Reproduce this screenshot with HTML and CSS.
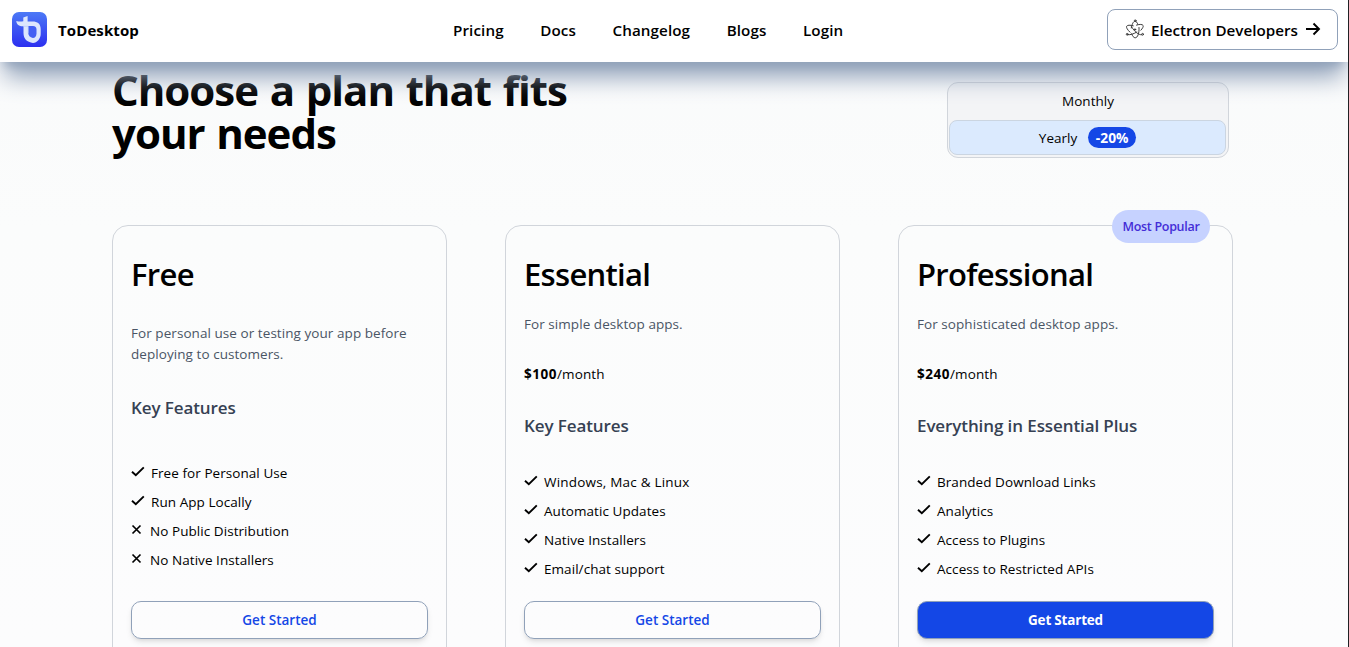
FILE: index.html
```html
<!DOCTYPE html>
<html lang="en">
<head>
<meta charset="utf-8">
<title>ToDesktop</title>
<link rel="stylesheet" href="styles.css">
</head>
<body>
<svg class="defs" width="0" height="0" aria-hidden="true">
  <symbol id="check" viewBox="0 0 14 12"><path d="M1 5.700 4.800 9.300 12.800 1.400" fill="none" stroke="#000" stroke-width="1.900"/></symbol>
  <symbol id="cross" viewBox="0 0 12 12"><path d="M1.500 1.500 9.500 9.500M9.500 1.500 1.500 9.500" fill="none" stroke="#000" stroke-width="1.700"/></symbol>
</svg>
<header class="topbar">
  <a class="brand">
    <svg class="logo" viewBox="0 0 36 36">
      <defs><linearGradient id="lg" x1="0" y1="0" x2="0" y2="1"><stop offset="0" stop-color="#4c79f6"/><stop offset="1" stop-color="#2c2ff0"/></linearGradient></defs>
      <rect x="0" y="0" width="35" height="35" rx="7" fill="url(#lg)"/>
      <path d="M4.300 9C6.500 9.700 9 9.800 11.300 9.300V5.500L15.600 4V9.600H20.500C25.500 9.600 28.700 12 28.700 17V22C28.700 26.500 25 31 21 31C15 30 11.500 27 11.500 21V14.300C7.500 14.600 4.500 12.500 4.300 9Z" fill="#dce6fd"/>
      <path d="M16.200 14H21C23.300 14 24.500 15.500 24.500 17.500V21.500C24.500 24 23 26 20.800 26C18 25.500 16.200 23.500 16.200 20.500Z" fill="#4360f3"/>
      <path d="M11.500 14.300H16.200V21" fill="none" stroke="#b9caf9" stroke-width="0.700"/>
    </svg>
    <span class="brand-name">ToDesktop</span>
  </a>
  <nav class="nav">
    <a>Pricing</a><a>Docs</a><a>Changelog</a><a>Blogs</a><a>Login</a>
  </nav>
  <a class="dev-button">
    <svg class="electron" viewBox="0 0 20 20" fill="none" stroke="#3c3c3c" stroke-width="1" stroke-linecap="round">
      <path d="M5 13.200C2.500 10.800 1 8.500 1.700 7.200C2.300 6 4.900 5.900 8.300 6.800"/>
      <path d="M11.500 6.100C14.800 5.100 17.500 5.200 18.100 6.500C18.600 7.600 17.600 9.300 15.900 11.200"/>
      <path d="M6.300 9C7 5 8.400 2.300 10 2.200C11.100 2.200 12.200 3.500 13 5.500"/>
      <path d="M14 8.500C14.400 14 12.700 18.800 10.200 18.800C8.700 18.800 7.500 17.200 6.700 14.800"/>
      <path d="M6.500 7.700C9.500 12.700 13.500 16 16.600 15.800"/>
      <path d="M2.800 15.700C5.500 16 8.800 14.900 11.800 13"/>
      <circle cx="10" cy="10.500" r="0.700" fill="#3c3c3c"/>
      <circle cx="10.200" cy="1.800" r="0.900"/>
      <circle cx="2.200" cy="15.300" r="0.900"/>
      <circle cx="17.600" cy="15.300" r="0.900"/>
    </svg>
    <span class="dev-label">Electron Developers</span>
    <svg class="arrow" viewBox="0 0 16 14" fill="none" stroke="#000" stroke-width="1.900"><path d="M1 7H14M8.500 1.500 14 7 8.500 12.500"/></svg>
  </a>
</header>
<main class="page">
  <section class="intro">
    <h1 class="title"><span class="title-one">Choose a plan that fits</span><br><span class="title-two">your needs</span></h1>
    <div class="billing">
      <div class="option">Monthly</div>
      <div class="option selected"><span class="yearly">Yearly</span><span class="discount">-20%</span></div>
    </div>
  </section>
  <section class="plans">
    <article class="card free">
      <h2>Free</h2>
      <p class="summary">For personal use or testing your app before<br>deploying to customers.</p>
      <h3>Key Features</h3>
      <ul>
        <li><svg class="check"><use href="#check"/></svg>Free for Personal Use</li>
        <li><svg class="check"><use href="#check"/></svg>Run App Locally</li>
        <li><svg class="cross"><use href="#cross"/></svg>No Public Distribution</li>
        <li><svg class="cross"><use href="#cross"/></svg>No Native Installers</li>
      </ul>
      <a class="cta">Get Started</a>
    </article>
    <article class="card">
      <h2>Essential</h2>
      <p class="summary">For simple desktop apps.</p>
      <p class="price"><b>$100</b>/month</p>
      <h3>Key Features</h3>
      <ul>
        <li class="wide"><svg class="check"><use href="#check"/></svg>Windows, Mac &amp; Linux</li>
        <li><svg class="check"><use href="#check"/></svg>Automatic Updates</li>
        <li><svg class="check"><use href="#check"/></svg>Native Installers</li>
        <li><svg class="check"><use href="#check"/></svg>Email/chat support</li>
      </ul>
      <a class="cta">Get Started</a>
    </article>
    <article class="card">
      <span class="popular">Most Popular</span>
      <h2>Professional</h2>
      <p class="summary">For sophisticated desktop apps.</p>
      <p class="price"><b>$240</b>/month</p>
      <h3>Everything in Essential Plus</h3>
      <ul>
        <li><svg class="check"><use href="#check"/></svg>Branded Download Links</li>
        <li><svg class="check"><use href="#check"/></svg>Analytics</li>
        <li><svg class="check"><use href="#check"/></svg>Access to Plugins</li>
        <li><svg class="check"><use href="#check"/></svg>Access to Restricted APIs</li>
      </ul>
      <a class="cta primary">Get Started</a>
    </article>
  </section>
</main>
</body>
</html>
```

FILE: styles.css
```css
* { box-sizing: border-box; }
html { height: 100%; overflow: hidden; }
body {
  margin: 0;
  height: 647px;
  overflow: hidden;
  border-right: 1px solid #202124;
  background: linear-gradient(#f9fafb, #fbfcfc 35%, #fcfcfd);
  color: #000;
  font-family: "Open Sans", "Noto Sans", sans-serif;
  font-size: 13.5px;
}
h1, h2, h3, p, ul { margin: 0; padding: 0; }
ul { list-style: none; }
svg { flex: none; }
.defs { display: block; }

.topbar {
  position: relative;
  z-index: 2;
  height: 62px;
  padding: 0 10px 0 12px;
  display: grid;
  grid-template-columns: 441px 1fr auto;
  align-items: center;
  background: #fff;
  box-shadow: 0 20px 25px -5px #90a1b9, 0 8px 10px -6px #90a1b9;
  font-size: 15.2px;
  font-weight: 600;
}
.brand { display: flex; align-items: center; gap: 10px; }
.logo { width: 36px; height: 36px; margin-top: -2px; }
.brand-name { margin-top: -2px; font-size: 15px; font-weight: 700; letter-spacing: 0.1px; }
.nav { display: flex; gap: 36.500px; margin-top: -2px; letter-spacing: 0.1px; }
.dev-button {
  height: 41px;
  width: 231px;
  margin-top: -3px;
  padding: 0 17px 0 17px;
  display: flex;
  align-items: center;
  border: 1px solid #90a1b9;
  border-radius: 8px;
  white-space: nowrap;
}
.dev-label { padding-top: 1px; }
.electron { width: 20px; height: 20px; margin: -1px 6px 0 0; }
.arrow { width: 16px; height: 14px; margin: -2px 0 0 7px; }

.page { padding: 0 115px 0 112px; }
.intro { height: 163px; display: flex; justify-content: space-between; }
.title {
  padding-top: 6px;
  font-size: 42px;
  line-height: 43px;
  font-weight: 700;
  letter-spacing: -1px;
  word-spacing: 1.7px;
  white-space: nowrap;
}
.billing {
  width: 282px;
  height: 76px;
  margin: 20px 4px 0 0;
  padding: 1px;
  border: 1px solid #d1d5db;
  border-radius: 11px;
  background: #f3f4f6;
}
.option { height: 36px; padding-bottom: 2px; display: flex; align-items: center; justify-content: center; }
.selected {
  width: 277px;
  height: 35px;
  gap: 11px;
  padding-bottom: 0;
  border: 1px solid #cbd5e1;
  border-radius: 8px;
  background: #dbeafe;
}
.discount {
  width: 48px;
  height: 21px;
  border-radius: 11px;
  background: #1447e6;
  color: #fff;
  font-size: 13.8px;
  font-weight: 700;
  line-height: 21px;
  text-align: center;
}

.plans { display: grid; grid-template-columns: repeat(3, 335px); gap: 58px; }
.card {
  position: relative;
  height: 470px;
  padding: 26px 18px;
  border: 1px solid #d1d5db;
  border-radius: 16px;
}
h2 { font-size: 31px; font-weight: 600; line-height: 44px; letter-spacing: -0.7px; }
.summary { margin-top: 18px; color: #4a5565; line-height: 21px; letter-spacing: 0.06px; }
.price { margin-top: 29px; line-height: 21px; letter-spacing: 0.15px; }
.price b { letter-spacing: 0.5px; }
h3 { margin-top: 28px; color: #364153; font-size: 17px; font-weight: 600; line-height: 26px; letter-spacing: -0.1px; }
ul { margin-top: 28px; }
li { height: 29px; display: flex; align-items: center; letter-spacing: 0.06px; }
.wide { letter-spacing: 0.2px; }
.free .summary { margin-top: 27px; }
.free h3 { margin-top: 30px; }
.free ul { margin-top: 37px; }
.check { width: 14px; height: 12px; margin: -1px 6px 0 0; }
.cross { width: 12px; height: 12px; margin: -2px 7px 0 0; }
.cta {
  width: 297px;
  height: 38px;
  margin-top: 18px;
  display: flex;
  align-items: center;
  justify-content: center;
  border: 1px solid #90a1b9;
  border-radius: 10px;
  box-shadow: 0 4px 6px -1px rgba(0, 0, 0, 0.1), 0 2px 4px -2px rgba(0, 0, 0, 0.1);
  color: #1447e6;
  font-weight: 600;
}
.free .cta { margin-top: 27px; }
.primary { background: #1447e6; color: #fff; font-weight: 700; letter-spacing: -0.2px; }
.popular {
  position: absolute;
  top: -16px;
  right: 22px;
  width: 98px;
  height: 33px;
  border-radius: 17px;
  background: #c6d2ff;
  color: #432dd7;
  font-size: 12.5px;
  font-weight: 600;
  line-height: 33px;
  letter-spacing: -0.3px;
  text-align: center;
}
```
